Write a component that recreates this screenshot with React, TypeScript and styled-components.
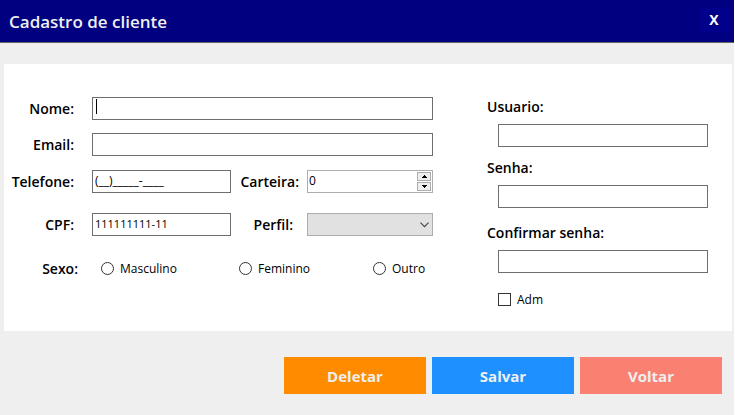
import React, { useState } from 'react';
import styled, { createGlobalStyle, css } from 'styled-components';

const GlobalStyle = createGlobalStyle`
  *, *::before, *::after { box-sizing: border-box; }
  body { margin: 0; background: #fff; }
  body, input, select, button {
    font-family: 'Open Sans', 'Noto Sans', sans-serif;
  }
`;

const Window = styled.div`
  display: flex;
  flex-direction: column;
  min-height: 100vh;
  margin-right: 1px;
  background: #efefef;
  color: #000;
`;

const TitleBar = styled.header`
  display: flex;
  align-items: center;
  justify-content: space-between;
  height: 43px;
  padding: 0 5px 2px 9px;
  background: #000080;
  border-bottom: 1px solid #646464;
`;

const Title = styled.h1`
  margin: 0;
  padding-top: 3px;
  font-size: 17px;
  line-height: 24px;
  font-weight: 600;
  color: #efefef;
`;

const CloseButton = styled.button`
  width: 30px;
  height: 24px;
  padding: 0;
  border: 0;
  background: #00008b;
  color: #fff;
  font-size: 14px;
  font-weight: 700;
  line-height: 24px;
`;

const Card = styled.form`
  display: grid;
  grid-template-columns: minmax(0, 423fr) minmax(0, 221fr);
  column-gap: 54px;
  margin: 21px 2px 0 4px;
  padding: 33px 24px 20px 6px;
  background: #fff;
`;

const PersonalFields = styled.div`
  display: grid;
  grid-template-columns: 82px minmax(0, 139fr) 76px minmax(0, 126fr);
  grid-template-rows: 36px 37px 43px 44px 23px;
  align-items: start;
`;

const labelText = css`
  font-size: 14px;
  font-weight: 600;
  white-space: nowrap;
`;

const Label = styled.label<{ $gap?: number }>`
  ${labelText}
  line-height: 23px;
  text-align: right;
  padding-right: ${({ $gap = 18 }) => $gap}px;
`;

const TextInput = styled.input<{ $wide?: boolean; $caret?: boolean; $small?: boolean }>`
  ${({ $wide }) => $wide && 'grid-column: 2 / -1;'}
  width: 100%;
  min-width: 0;
  height: 23px;
  padding: 0 2px 2px;
  border: 1px solid #6e6e6e;
  border-radius: 0;
  background: #fff;
  color: #000;
  font-size: ${({ $small }) => ($small ? 11 : 12)}px;
  outline: 0;
  ${({ $caret }) =>
    $caret &&
    'background: linear-gradient(#000, #000) 3px 1px / 1px 15px no-repeat #fff;'}
`;

const Spinner = styled.div`
  display: flex;
  height: 23px;
  padding: 1px;
  border: 1px solid #adadad;
  background: #fff;
`;

const SpinnerInput = styled.input`
  flex: 1;
  min-width: 0;
  padding: 0 0 2px;
  border: 0;
  outline: 0;
  font-size: 12px;
  color: #000;
  appearance: textfield;
  &::-webkit-inner-spin-button { appearance: none; margin: 0; }
`;

const SpinnerButtons = styled.div`
  display: flex;
  flex-direction: column;
  gap: 1px;
  width: 14px;
`;

const StepButton = styled.button`
  display: flex;
  flex: 1;
  align-items: center;
  justify-content: center;
  padding: 0;
  border: 1px solid #adadad;
  background: #efefef;
`;

const SelectBox = styled.div`
  display: grid;
  align-items: center;
  height: 23px;
  & > * { grid-area: 1 / 1; }
  & > svg { justify-self: end; margin-right: 4px; pointer-events: none; }
`;

const Select = styled.select`
  width: 100%;
  height: 23px;
  padding: 0 20px 0 4px;
  border: 1px solid #adadad;
  border-radius: 0;
  background: #e1e1e1;
  color: #000;
  font-size: 12px;
  appearance: none;
`;

const RadioGroup = styled.div`
  display: grid;
  grid-column: 2 / -1;
  grid-template-columns: 138fr 134fr 60fr;
  padding-left: 9px;
`;

const GroupLabel = styled.span`
  ${labelText}
  line-height: 23px;
  text-align: right;
  padding-right: 14px;
`;

const Choice = styled.label`
  display: flex;
  align-items: center;
  gap: 6px;
  line-height: 23px;
  font-size: 12px;
`;

const Mark = styled.input`
  appearance: none;
  flex: none;
  width: 13px;
  height: 13px;
  margin: 0;
  border: 1px solid #333;
  background: #fff;
  &[type='radio'] { border-radius: 50%; }
  &:checked { box-shadow: inset 0 0 0 2px #fff; background: #333; }
`;

const AccessFields = styled.div`
  display: grid;
  grid-template-rows: 61px 65px 65px 23px;
`;

const Field = styled.div`
  display: flex;
  flex-direction: column;
  gap: 7px;
`;

const FieldLabel = styled.label`
  ${labelText}
  line-height: 20px;
`;

const Inset = styled.div`
  display: flex;
  padding-left: 11px;
`;

const Actions = styled.footer`
  display: flex;
  justify-content: flex-end;
  gap: 6px;
  padding: 26px 12px 21px;
`;

const ActionButton = styled.button<{ $color: string }>`
  width: 142px;
  height: 37px;
  padding: 0;
  border: 0;
  background: ${({ $color }) => $color};
  color: #efefef;
  font-size: 15px;
  font-weight: 700;
`;

function Arrow({ up = false }: { up?: boolean }) {
  return (
    <svg width="5" height="3" viewBox="0 0 5 3" shapeRendering="crispEdges" aria-hidden="true">
      <path d={up ? 'M2 0h1v1h1v1h1v1H0V2h1V1h1z' : 'M0 0h5v1H4v1H3v1H2V2H1V1H0z'} fill="#000" />
    </svg>
  );
}

const accessFields = [
  { id: 'usuario', label: 'Usuario:', type: 'text' },
  { id: 'senha', label: 'Senha:', type: 'password' },
  { id: 'confirmar', label: 'Confirmar senha:', type: 'password' },
];

const actions = [
  { label: 'Deletar', color: '#ff8c00' },
  { label: 'Salvar', color: '#1e90ff' },
  { label: 'Voltar', color: '#fa8072' },
];

export default function App() {
  const [carteira, setCarteira] = useState(0);

  return (
    <Window>
      <GlobalStyle />
      <TitleBar>
        <Title>Cadastro de cliente</Title>
        <CloseButton type="button">X</CloseButton>
      </TitleBar>
      <Card>
        <PersonalFields>
          <Label htmlFor="nome">Nome:</Label>
          <TextInput id="nome" $wide $caret />

          <Label htmlFor="email">Email:</Label>
          <TextInput id="email" $wide />

          <Label htmlFor="telefone">Telefone:</Label>
          <TextInput id="telefone" defaultValue="(__)_____-____" />
          <Label htmlFor="carteira" $gap={8}>Carteira:</Label>
          <Spinner>
            <SpinnerInput
              id="carteira"
              type="number"
              value={carteira}
              onChange={(e) => setCarteira(Number(e.target.value))}
            />
            <SpinnerButtons>
              <StepButton type="button" aria-label="Aumentar" onClick={() => setCarteira(carteira + 1)}>
                <Arrow up />
              </StepButton>
              <StepButton type="button" aria-label="Diminuir" onClick={() => setCarteira(carteira - 1)}>
                <Arrow />
              </StepButton>
            </SpinnerButtons>
          </Spinner>

          <Label htmlFor="cpf">CPF:</Label>
          <TextInput id="cpf" defaultValue="111111111-11" $small />
          <Label htmlFor="perfil" $gap={14}>Perfil:</Label>
          <SelectBox>
            <Select id="perfil" />
            <svg width="9" height="6" viewBox="0 0 9 6" fill="none" aria-hidden="true">
              <path d="M.5.7 4.5 4.7 8.5.7" stroke="#444" strokeWidth="1.1" />
            </svg>
          </SelectBox>

          <GroupLabel id="sexo">Sexo:</GroupLabel>
          <RadioGroup role="radiogroup" aria-labelledby="sexo">
            {['Masculino', 'Feminino', 'Outro'].map((option) => (
              <Choice key={option}>
                <Mark type="radio" name="sexo" value={option} />
                {option}
              </Choice>
            ))}
          </RadioGroup>
        </PersonalFields>

        <AccessFields>
          {accessFields.map(({ id, label, type }) => (
            <Field key={id}>
              <FieldLabel htmlFor={id}>{label}</FieldLabel>
              <Inset>
                <TextInput id={id} type={type} />
              </Inset>
            </Field>
          ))}
          <Inset>
            <Choice>
              <Mark type="checkbox" />
              Adm
            </Choice>
          </Inset>
        </AccessFields>
      </Card>
      <Actions>
        {actions.map(({ label, color }) => (
          <ActionButton key={label} type="button" $color={color}>
            {label}
          </ActionButton>
        ))}
      </Actions>
    </Window>
  );
}
